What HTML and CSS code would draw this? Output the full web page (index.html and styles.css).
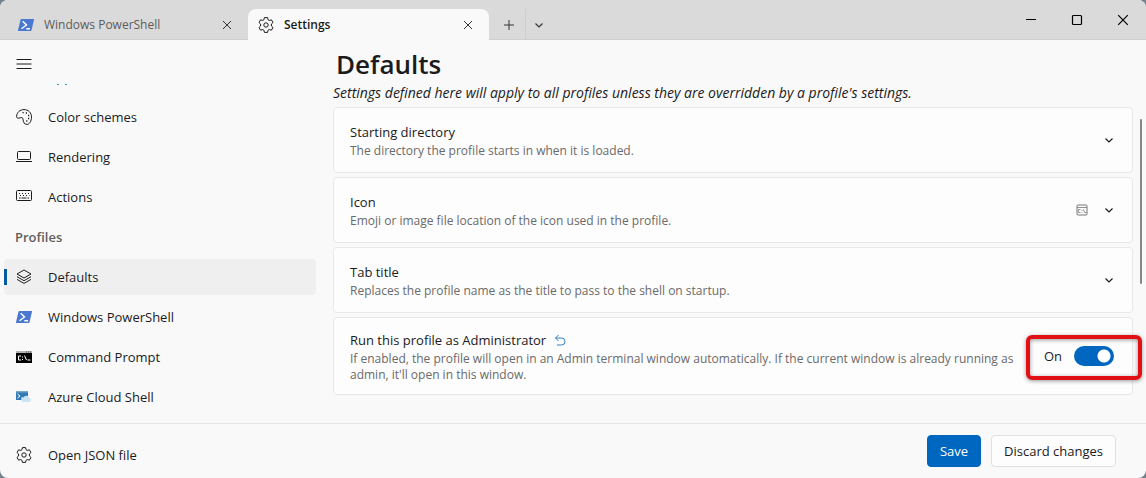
FILE: index.html
```html
<!DOCTYPE html>
<html lang="en">
<head>
    <meta charset="UTF-8">
    <meta name="viewport" content="width=device-width, initial-scale=1.0">
    <title>Settings</title>
    <link rel="stylesheet" href="styles.css">
</head>
<body>
    <!-- shared icons -->
    <svg class="sprite" aria-hidden="true">
        <symbol id="gear" viewBox="0 0 16 16">
            <path d="M6.400.6h3.200l.5 2.200 1.200.7 2.100-.7 1.600 2.700-1.600 1.500v2l1.600 1.500-1.600 2.700-2.100-.7-1.200.7-.5 2.200H6.400l-.5-2.200-1.200-.7-2.100.7L1 10.500 2.600 9V7L1 5.500l1.600-2.700 2.100.7 1.200-.7z" fill="none" stroke="currentColor" stroke-linejoin="round"/>
            <circle cx="8" cy="8" r="2.200" fill="none" stroke="currentColor"/>
        </symbol>
        <symbol id="powershell" viewBox="0 0 16 16">
            <path d="M3.400 2h12.100c.4 0 .6.3.5.700l-2.500 10.600c-.1.400-.5.700-.9.700H.5c-.4 0-.6-.3-.5-.700L2.500 2.700c.1-.4.5-.7.900-.7z" fill="#4a78cf"/>
            <path d="M4.700 4.300 8.500 8l-5 3.700M8.300 11.700h3.700" fill="none" stroke="#fff" stroke-width="1.400"/>
        </symbol>
        <symbol id="close" viewBox="0 0 10 10">
            <path d="M1 1l8 8M9 1L1 9" fill="none" stroke="currentColor"/>
        </symbol>
        <symbol id="chevron" viewBox="0 0 10 10">
            <path d="M1.500 3.500 5 7l3.500-3.500" fill="none" stroke="currentColor" stroke-width="1.200"/>
        </symbol>
    </svg>

    <div class="window">
        <header class="titlebar">
            <div class="tab">
                <svg class="icon"><use href="#powershell"/></svg>
                <span class="tab-title">Windows PowerShell</span>
                <button class="tab-close" aria-label="Close tab"><svg class="icon-small"><use href="#close"/></svg></button>
            </div>
            <div class="tab active">
                <svg class="icon"><use href="#gear"/></svg>
                <span class="tab-title">Settings</span>
                <button class="tab-close" aria-label="Close tab"><svg class="icon-small"><use href="#close"/></svg></button>
            </div>
            <button class="new-tab" aria-label="New tab">
                <svg class="icon-small" viewBox="0 0 10 10"><path d="M5 0v10M0 5h10" fill="none" stroke="currentColor"/></svg>
            </button>
            <button class="tab-menu" aria-label="New tab menu"><svg class="icon-small"><use href="#chevron"/></svg></button>
            <div class="window-buttons">
                <button aria-label="Minimize"><svg class="icon-caption" viewBox="0 0 12 12"><path d="M1 5.500h10" stroke="currentColor"/></svg></button>
                <button aria-label="Maximize"><svg class="icon-caption" viewBox="0 0 12 12"><rect x="1.500" y="1.500" width="9" height="9" rx="1" fill="none" stroke="currentColor" stroke-width="1.200"/></svg></button>
                <button aria-label="Close"><svg class="icon-caption"><use href="#close"/></svg></button>
            </div>
        </header>

        <div class="content">
            <nav class="sidebar">
                <button class="menu-button" aria-label="Toggle navigation">
                    <svg class="icon" viewBox="0 0 16 16"><path d="M.5 4.500h15M.5 9h15M.5 13.500h15" stroke="currentColor"/></svg>
                </button>
                <div class="nav-list">
                    <a href="#" class="nav-item"><span class="icon"></span>Appearance</a>
                    <a href="#" class="nav-item">
                        <svg class="icon" viewBox="0 0 16 16">
                            <path d="M.6 7.300C.9 3.300 4 .6 8 .6c4.500 0 7.500 3.300 7.500 7.400 0 4.200-2 7.400-4.500 7.400-3 0-3.600-2.400-3.900-4.500C6.900 9 6.400 8.300 5.200 8.600l-2.500.600C1.400 9.500.5 8.700.6 7.300z" fill="none" stroke="currentColor"/>
                            <path d="M6.500 3.700h1.200M9.800 4h1.200M12 6.500h1.200M12 9.500h1.200M10.200 12h1.200" stroke="currentColor" stroke-width="1.300"/>
                        </svg>Color schemes
                    </a>
                    <a href="#" class="nav-item">
                        <svg class="icon" viewBox="0 0 16 16"><rect x="1.500" y="2.500" width="13" height="8" rx="1" fill="none" stroke="currentColor"/><path d="M0 12.500h16" stroke="currentColor"/></svg>Rendering
                    </a>
                    <a href="#" class="nav-item">
                        <svg class="icon" viewBox="0 0 16 16"><rect x=".5" y="1.500" width="15" height="10" rx="1" fill="none" stroke="currentColor"/><path d="M3 4.500h10.500M4 6.500h9.500" stroke="currentColor" stroke-dasharray="1 2"/><path d="M3 9h1.500M5.500 9h5M11.500 9H13" stroke="currentColor"/></svg>Actions
                    </a>
                    <h2 class="nav-heading">Profiles</h2>
                    <a href="#" class="nav-item selected" aria-current="page">
                        <svg class="icon" viewBox="0 0 16 16"><path d="M8 1 15 5 8 9 1 5zM1 7.700l7 4 7-4M1 10.400l7 4 7-4" fill="none" stroke="currentColor" stroke-linejoin="round"/></svg>Defaults
                    </a>
                    <a href="#" class="nav-item"><svg class="icon"><use href="#powershell"/></svg>Windows PowerShell</a>
                    <a href="#" class="nav-item">
                        <svg class="icon" viewBox="0 0 16 16">
                            <path d="M0 2h16v12H0z" fill="#000"/>
                            <path d="M0 2h16v2H0z" fill="#b4b4b4"/>
                            <path d="M10 3h1M12 3h1M14 3h1" stroke="#444"/>
                            <path d="M5 7H2.500v4H5M6.500 7.500v1M6.500 10v1M8.500 6.500l2 4.500M11.500 11h3" fill="none" stroke="#fff"/>
                        </svg>Command Prompt
                    </a>
                    <a href="#" class="nav-item">
                        <svg class="icon" viewBox="0 0 16 16">
                            <path d="M0 2h12v9H0z" fill="#3079b5"/>
                            <path d="M0 2h12v1.500H0z" fill="#75a9cf"/>
                            <path d="M1.500 5l2.500 2-2.500 2M5 9h2.500" fill="none" stroke="#fff"/>
                            <path d="M7.500 13a2.200 2.200 0 0 1 0-4.400 3 3 0 0 1 5.600.2A2.200 2.200 0 0 1 13.500 13z" fill="#c9e4f5"/>
                        </svg>Azure Cloud Shell
                    </a>
                </div>
            </nav>

            <main class="main">
                <h1>Defaults</h1>
                <p class="intro">Settings defined here will apply to all profiles unless they are overridden by a profile's settings.</p>
                <div class="settings">
                    <button class="card">
                        <span class="card-text">
                            <span class="card-title">Starting directory</span>
                            <span class="card-desc">The directory the profile starts in when it is loaded.</span>
                        </span>
                        <svg class="icon-small"><use href="#chevron"/></svg>
                    </button>
                    <button class="card">
                        <span class="card-text">
                            <span class="card-title">Icon</span>
                            <span class="card-desc">Emoji or image file location of the icon used in the profile.</span>
                        </span>
                        <svg class="icon-preview" viewBox="0 0 12 12"><rect x="1" y="1" width="10" height="10" rx="1" fill="none" stroke="currentColor"/><path d="M1 3.500h10M4.500 5.500h-2v3h2M6 6v.8M6 8v.8M7.300 5.300l1.500 3.500M9 8.500h1.300" fill="none" stroke="currentColor" stroke-width=".8"/></svg>
                        <svg class="icon-small"><use href="#chevron"/></svg>
                    </button>
                    <button class="card">
                        <span class="card-text">
                            <span class="card-title">Tab title</span>
                            <span class="card-desc">Replaces the profile name as the title to pass to the shell on startup.</span>
                        </span>
                        <svg class="icon-small"><use href="#chevron"/></svg>
                    </button>
                    <div class="card">
                        <div class="card-text">
                            <div class="card-title">
                                Run this profile as Administrator
                                <button class="reset" aria-label="Reset to default">
                                    <svg class="icon-reset" viewBox="0 0 12 12"><path d="M4.500 1 1.500 4l3 3M1.500 4h6a3.500 3.500 0 0 1 0 7H3" fill="none" stroke="currentColor"/></svg>
                                </button>
                            </div>
                            <div class="card-desc">If enabled, the profile will open in an Admin terminal window automatically. If the current window is already running as admin, it'll open in this window.</div>
                        </div>
                        <label class="switch">On <input type="checkbox" role="switch" checked></label>
                    </div>
                </div>
                <div class="scrollbar"></div>
            </main>
        </div>

        <footer class="footer">
            <a href="#" class="nav-item"><svg class="icon"><use href="#gear"/></svg>Open JSON file</a>
            <button class="button primary">Save</button>
            <button class="button">Discard changes</button>
        </footer>
    </div>
</body>
</html>
```
FILE: styles.css
```css
* {
    box-sizing: border-box;
}
body {
    margin: 0;
    font-family: "Open Sans", "Noto Sans", sans-serif;
    font-size: 13px;
    line-height: 20px;
    color: #1b1b1b;
    background-color: #74838d;
}
button {
    font: inherit;
    color: inherit;
    padding: 0;
    border: none;
    background: none;
}
svg {
    display: block;
}
.sprite {
    display: none;
}
.icon {
    width: 16px;
    height: 16px;
    flex: none;
}
.icon-small {
    width: 10px;
    height: 10px;
    flex: none;
}
.icon-caption,
.icon-preview,
.icon-reset {
    width: 12px;
    height: 12px;
    flex: none;
}
.window {
    display: flex;
    flex-direction: column;
    height: 100vh;
    border-radius: 8px;
    overflow: hidden;
    background-color: #f9f9f9;
}

/* title bar */
.titlebar {
    display: flex;
    align-items: flex-end;
    height: 40px;
    flex: none;
    background-color: #dadada;
    box-shadow: inset 0 -1px #cfcfcf;
}
.tab {
    display: flex;
    align-items: center;
    gap: 10px;
    width: 241px;
    height: 31px;
    padding: 0 16px 0 10px;
    font-size: 12px;
    color: #5c5c5c;
}
.tab:first-child {
    width: 248px;
    padding-left: 18px;
}
.tab.active {
    color: #1b1b1b;
    font-weight: 600;
    background-color: #f9f9f9;
    border-radius: 8px 8px 0 0;
}
.tab-title {
    flex: 1;
}
.tab-close {
    color: #333;
}
.new-tab,
.tab-menu {
    display: flex;
    align-items: center;
    justify-content: center;
    height: 31px;
    color: #333;
}
.new-tab {
    width: 37px;
    padding-left: 4px;
    border-right: 1px solid #cecece;
}
.tab-menu {
    width: 26px;
}
.window-buttons {
    display: flex;
    align-self: stretch;
    margin-left: auto;
}
.window-buttons button {
    display: flex;
    align-items: center;
    justify-content: center;
    width: 46px;
    color: #000;
}

/* navigation */
.content {
    display: flex;
    flex: 1;
    min-height: 0;
}
.sidebar {
    display: flex;
    flex-direction: column;
    width: 320px;
    flex: none;
}
.menu-button {
    height: 44px;
    padding: 2px 16px 0;
    align-self: flex-start;
}
.nav-list {
    display: flex;
    flex-direction: column;
    justify-content: flex-end;
    gap: 4px;
    flex: 1;
    min-height: 0;
    padding: 0 4px 8px;
    overflow: hidden;
}
.nav-item {
    display: flex;
    align-items: center;
    gap: 16px;
    flex: none;
    height: 36px;
    padding: 0 12px;
    border-radius: 4px;
    color: inherit;
    text-decoration: none;
}
.nav-item.selected {
    background: linear-gradient(#005a9e, #005a9e) left center / 3px 16px no-repeat #efefef;
}
.nav-heading {
    flex: none;
    margin: 0;
    padding: 0 11px;
    font-size: 13px;
    font-weight: 600;
    line-height: 36px;
    color: #5f5f5f;
}

/* settings */
.main {
    position: relative;
    flex: 1;
    min-width: 0;
    padding: 5px 13px 0;
    overflow: hidden;
}
h1 {
    margin: 0;
    padding-left: 3px;
    font-size: 26px;
    font-weight: 600;
    line-height: 38px;
}
.intro {
    margin: 0 0 4px;
    font-size: 14px;
    font-style: italic;
}
.settings {
    display: flex;
    flex-direction: column;
    gap: 4px;
}
.card {
    display: flex;
    align-items: center;
    gap: 16px;
    min-height: 66px;
    padding: 11px 18px 11px 16px;
    text-align: left;
    background-color: #fdfdfd;
    border: 1px solid #e8e8e8;
    border-radius: 4px;
}
.card-text {
    flex: 1;
}
.card-title,
.card-desc {
    display: block;
}
.card-title {
    line-height: 22px;
}
div.card-title {
    display: flex;
    align-items: center;
    gap: 8px;
}
.card-desc {
    max-width: 670px;
    font-size: 12px;
    line-height: 16px;
    color: #6a6a6a;
}
.icon-preview {
    color: #777;
}
.reset {
    color: #2f7fc4;
}
.switch {
    display: flex;
    align-items: center;
    gap: 12px;
    position: relative;
}
.switch input {
    appearance: none;
    width: 40px;
    height: 20px;
    margin: 0;
    border-radius: 10px;
    background: radial-gradient(circle at 30px 10px, #fff 6px, #0067c0 7px);
}
/* red highlight around the switch */
.switch::after {
    content: "";
    position: absolute;
    inset: -11px -28px -14px -18px;
    border: 4px solid #e01015;
    border-radius: 6px;
    box-shadow: 0 1px 4px rgba(0,0,0,0.4), inset 0 1px 4px rgba(0,0,0,0.4);
    pointer-events: none;
}
.scrollbar {
    position: absolute;
    top: 79px;
    right: 4px;
    width: 2px;
    height: 165px;
    border-radius: 1px;
    background-color: #868686;
}

/* footer */
.footer {
    display: flex;
    align-items: center;
    gap: 10px;
    height: 55px;
    flex: none;
    padding: 0 30px 0 4px;
    border-top: 1px solid #e5e5e5;
}
.footer .nav-item {
    margin-right: auto;
    padding-top: 8px;
}
.button {
    height: 32px;
    padding: 0 12px;
    border: 1px solid #e0e0e0;
    border-radius: 4px;
    background-color: #fdfdfd;
}
.button.primary {
    color: #fff;
    background-color: #0067c0;
    border-color: #0067c0;
}
```
